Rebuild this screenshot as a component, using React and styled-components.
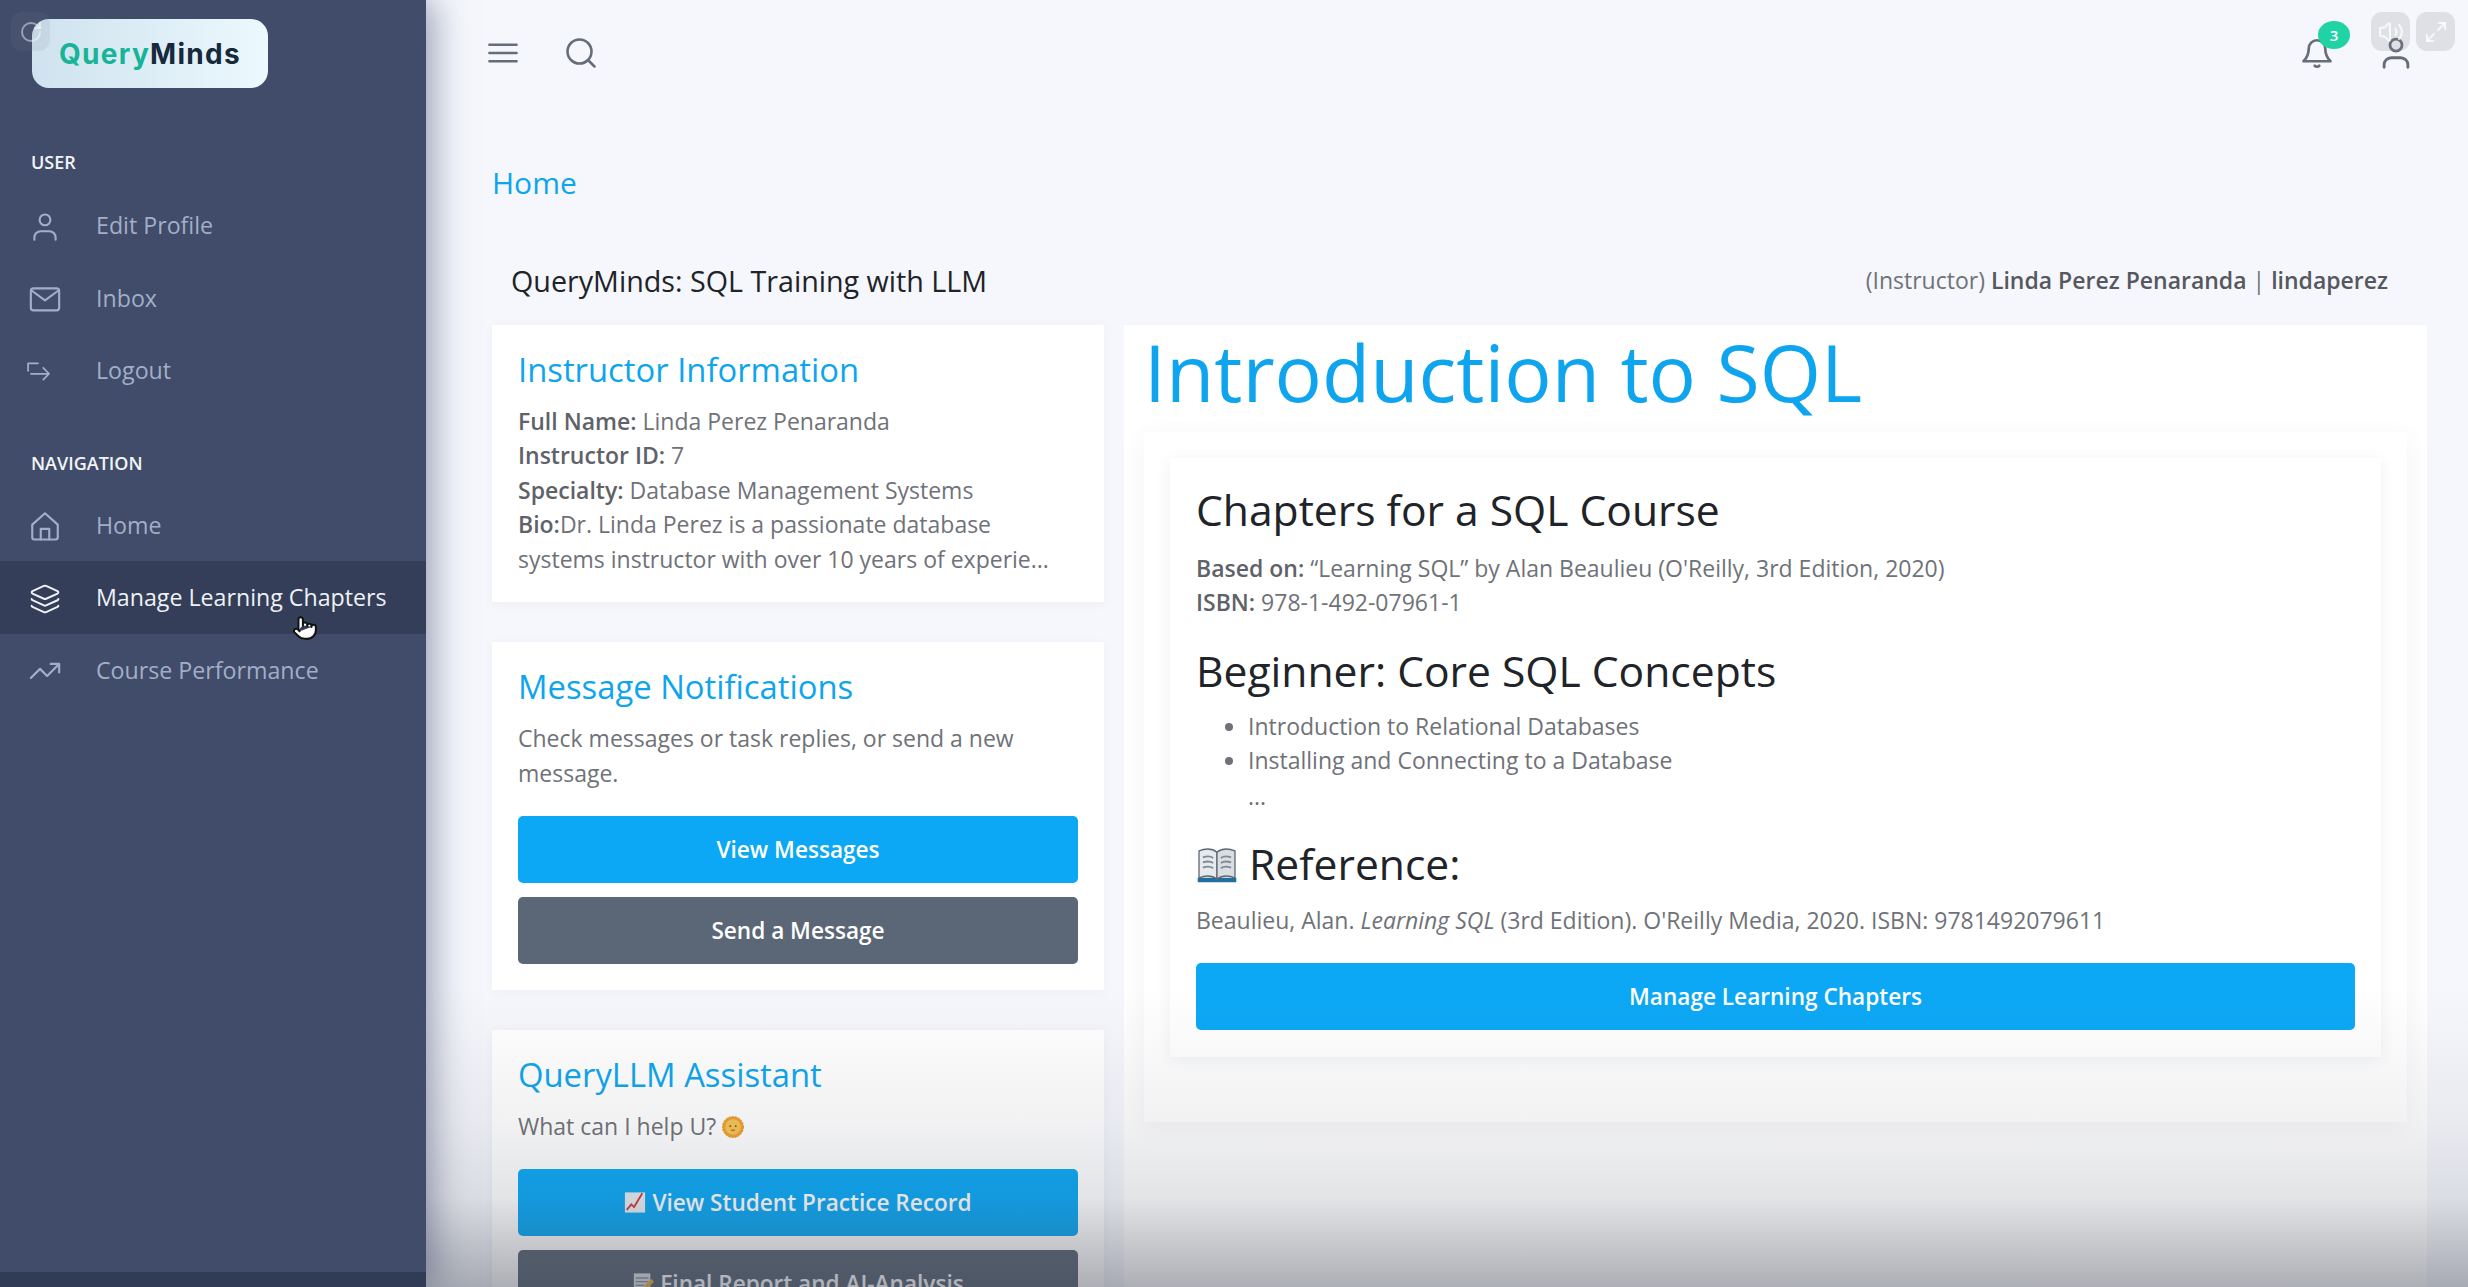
import React from 'react'
import styled, { createGlobalStyle } from 'styled-components'
import { Layers, TrendingUp, Search, Maximize2, Volume2, RotateCw, Pointer } from 'lucide-react'

const GlobalStyle = createGlobalStyle`
  html, body { margin: 0; padding: 0; background: #f5f7fc; }
  body { font-family: 'Open Sans', 'Noto Sans', sans-serif; overflow: hidden; }
  * { box-sizing: border-box; }
`

function Line({ size = 34, width = 1.5, children }) {
  return (
    <svg width={size} height={size} viewBox="0 0 24 24" fill="none" stroke="currentColor" strokeWidth={width} strokeLinecap="round" strokeLinejoin="round">
      {children}
    </svg>
  )
}

const UserIcon = props => (
  <Line {...props}>
    <circle cx="12" cy="7" r="3.8" />
    <path d="M4.5 21v-1.5a4.5 4.5 0 0 1 4.5-4.5h6a4.5 4.5 0 0 1 4.5 4.5V21" />
  </Line>
)
const MailIcon = props => (
  <Line {...props}>
    <rect x="2" y="4.5" width="20" height="15.500" rx="1.8" />
    <path d="M2.5 6l9.5 7 9.5-7" />
  </Line>
)
const LogoutIcon = props => (
  <Line {...props}>
    <path d="M12 4.500H3.500v6.500" />
    <path d="M6 13.500h15M16.500 8.500l5 5-5 5" />
  </Line>
)
const HomeIcon = props => (
  <Line {...props}>
    <path d="M3 11l9-8 9 8v9a1.500 1.500 0 0 1-1.500 1.500h-15A1.500 1.500 0 0 1 3 20z" />
    <path d="M9 21.500V14h6v7.500" />
  </Line>
)
const BellIcon = props => (
  <Line {...props}>
    <path d="M12 3.500a5.500 5.500 0 0 0-5.500 5.500c0 4-1 6-3.500 8.500h18c-2.500-2.500-3.500-4.500-3.500-8.500A5.500 5.500 0 0 0 12 3.500z" />
    <path d="M10.500 20.500c.8.900 2.200.900 3 0" />
  </Line>
)
const MenuIcon = props => (
  <Line {...props}>
    <path d="M3 6.500h18M3 12h18M3 17.500h18" />
  </Line>
)

const SunEmoji = () => (
  <EmojiSvg viewBox="0 0 24 24" width="22" height="22">
    <circle cx="12" cy="12" r="11.500" fill="#f0a02c" strokeDasharray="2 1.500" stroke="#e08d18" />
    <circle cx="12" cy="12" r="8.500" fill="#f6c255" />
    <circle cx="9" cy="11" r="1" fill="#7a4a10" />
    <circle cx="15" cy="11" r="1" fill="#7a4a10" />
    <path d="M10 15.500h4" stroke="#7a4a10" strokeWidth="1" />
  </EmojiSvg>
)
const ChartEmoji = () => (
  <EmojiSvg viewBox="0 0 24 24" width="22" height="23">
    <rect x="1" y="1" width="22" height="22" fill="#e9edf2" />
    <path d="M3 20l5-6 3 3 9-15" fill="none" stroke="#d23a3a" strokeWidth="2" />
  </EmojiSvg>
)
const MemoEmoji = () => (
  <EmojiSvg viewBox="0 0 24 24" width="22" height="23">
    <rect x="2" y="1" width="18" height="22" fill="#dfe3e8" />
    <path d="M4 6h14M4 10h14M4 14h9" stroke="#8c96a3" strokeWidth="1.500" />
    <path d="M9 22l2-5L21 7l3 3-10 10z" fill="#f2b53a" />
  </EmojiSvg>
)
const BookEmoji = () => (
  <EmojiSvg viewBox="0 0 32 28" width="42" height="36">
    <path d="M1 24h30v3.500H1z" fill="#1f6f9f" />
    <path d="M2 3c5-2 10-2 14 1v21c-4-3-9-3-14-1z" fill="#e6eaee" stroke="#5d6771" strokeWidth="1" />
    <path d="M30 3c-5-2-10-2-14 1v21c4-3 9-3 14-1z" fill="#d9dee3" stroke="#5d6771" strokeWidth="1" />
    <path d="M5 8c3-1 6-1 8 .5M5 12c3-1 6-1 8 .5M5 16c3-1 6-1 8 .5M27 8c-3-1-6-1-8 .5M27 12c-3-1-6-1-8 .5M27 16c-3-1-6-1-8 .5" stroke="#7f8993" strokeWidth="1.400" fill="none" />
  </EmojiSvg>
)

export default function App() {
  return (
    <Shell>
      <GlobalStyle />
      <Sidebar>
        <Logo><span>Query</span><b>Minds</b></Logo>
        <SectionLabel>USER</SectionLabel>
        <NavItem><NavIcon><UserIcon /></NavIcon>Edit Profile</NavItem>
        <NavItem><NavIcon><MailIcon /></NavIcon>Inbox</NavItem>
        <NavItem><NavIcon $shift={-7}><LogoutIcon size={28} /></NavIcon>Logout</NavItem>
        <SectionLabel $second>NAVIGATION</SectionLabel>
        <NavItem><NavIcon><HomeIcon /></NavIcon>Home</NavItem>
        <NavItem $active>
          <NavIcon><Layers size={32} strokeWidth={1.500} /></NavIcon>
          Manage Learning Chapters
          <HandCursor><Pointer size={26} fill="#fff" color="#111" strokeWidth={1.800} /></HandCursor>
        </NavItem>
        <NavItem><NavIcon><TrendingUp size={36} strokeWidth={1.500} /></NavIcon>Course Performance</NavItem>
      </Sidebar>

      <Main>
        <TopBar>
          <ToolGroup>
            <ToolIcon><MenuIcon size={36} width={1.800} /></ToolIcon>
            <ToolIcon><Search size={36} strokeWidth={1.700} /></ToolIcon>
          </ToolGroup>
          <ToolGroup>
            <ToolIcon>
              <BellIcon size={36} width={1.800} />
              <Badge>3</Badge>
            </ToolIcon>
            <ToolIcon><UserIcon size={38} width={1.800} /></ToolIcon>
          </ToolGroup>
        </TopBar>

        <Breadcrumb>Home</Breadcrumb>

        <TitleRow>
          <CourseTitle>QueryMinds: SQL Training with LLM</CourseTitle>
          <Who>(Instructor) <strong>Linda Perez Penaranda</strong> | <strong>lindaperez</strong></Who>
        </TitleRow>

        <Columns>
          <LeftColumn>
            <Card>
              <CardTitle>Instructor Information</CardTitle>
              <Text>
                <strong>Full Name:</strong> Linda Perez Penaranda<br />
                <strong>Instructor ID:</strong> 7<br />
                <strong>Specialty:</strong> Database Management Systems<br />
                <strong>Bio:</strong>Dr. Linda Perez is a passionate database systems instructor with over 10 years of experie...
              </Text>
            </Card>
            <Card>
              <CardTitle>Message Notifications</CardTitle>
              <Text>Check messages or task replies, or send a new message.</Text>
              <ButtonStack>
                <ActionButton>View Messages</ActionButton>
                <ActionButton $secondary>Send a Message</ActionButton>
              </ButtonStack>
            </Card>
            <Card>
              <CardTitle>QueryLLM Assistant</CardTitle>
              <Text>What can I help U? <SunEmoji /></Text>
              <ButtonStack>
                <ActionButton><ChartEmoji /> View Student Practice Record</ActionButton>
                <ActionButton $secondary><MemoEmoji /> Final Report and AI-Analysis</ActionButton>
              </ButtonStack>
            </Card>
          </LeftColumn>

          <ChapterPanel>
            <BigTitle>Introduction to SQL</BigTitle>
            <OuterCard>
              <InnerCard>
                <SectionTitle>Chapters for a SQL Course</SectionTitle>
                <Text>
                  <strong>Based on:</strong> “Learning SQL” by Alan Beaulieu (O'Reilly, 3rd Edition, 2020)<br />
                  <strong>ISBN:</strong> 978-1-492-07961-1
                </Text>
                <SectionTitle $gap={20} $after={9}>Beginner: Core SQL Concepts</SectionTitle>
                <Bullets>
                  <li>Introduction to Relational Databases</li>
                  <li>Installing and Connecting to a Database</li>
                  <Ellipsis>...</Ellipsis>
                </Bullets>
                <SectionTitle $gap={19} $after={10}><BookEmoji /> Reference:</SectionTitle>
                <Text>Beaulieu, Alan. <em>Learning SQL</em> (3rd Edition). O'Reilly Media, 2020. ISBN: 9781492079611</Text>
                <WideButton>Manage Learning Chapters</WideButton>
              </InnerCard>
            </OuterCard>
          </ChapterPanel>
        </Columns>

        <BottomFade />
      </Main>

      <PlayerButton $left={11} $faint><RotateCw size={24} /></PlayerButton>
      <PlayerButton $left={2371}><Volume2 size={26} /></PlayerButton>
      <PlayerButton $left={2416}><Maximize2 size={24} /></PlayerButton>
    </Shell>
  )
}

const Shell = styled.div`
  position: relative;
  display: flex;
  width: 2468px;
  height: 1287px;
  overflow: hidden;
  background: #f5f7fc;
  color: #6b6f76;
`

const Sidebar = styled.aside`
  position: relative;
  z-index: 2;
  flex: 0 0 426px;
  padding-top: 19px;
  background: #404c69;
  border-bottom: 15px solid #313b55;
  box-shadow: 6px 0 34px rgba(50, 60, 100, 0.5);
`

const Logo = styled.div`
  display: flex;
  align-items: center;
  justify-content: center;
  width: 236px;
  height: 69px;
  margin-left: 32px;
  border-radius: 17px;
  background: linear-gradient(90deg, #cfe2ee, #ecf9fe);
  font-family: 'Inter', sans-serif;
  font-size: 28px;
  font-weight: 700;
  letter-spacing: 1.300px;

  span { color: #18b497; }
  b { color: #17293c; font-weight: 700; }
`

const SectionLabel = styled.div`
  height: 24px;
  margin: ${p => (p.$second ? '44px' : '62px')} 0 ${p => (p.$second ? '14px' : '15px')} 31px;
  color: #f2f4f8;
  font-size: 18px;
  font-weight: 600;
  line-height: 24px;
`

const NavItem = styled.div`
  position: relative;
  display: flex;
  align-items: center;
  height: 72.500px;
  padding-left: 96px;
  background: ${p => (p.$active ? '#343e58' : 'transparent')};
  color: ${p => (p.$active ? '#eef1f6' : '#a3aec8')};
  font-size: 23.200px;
`

const NavIcon = styled.span`
  position: absolute;
  left: ${p => 28 + (p.$shift || 0)}px;
  display: flex;
  justify-content: center;
  width: 34px;
  padding-top: 3px;
`

const HandCursor = styled.span`
  position: absolute;
  left: 292px;
  top: 54px;
  display: flex;
`

const Main = styled.main`
  position: relative;
  flex: 1;
  min-width: 0;
  padding: 0 41px 0 66px;
`

const TopBar = styled.header`
  display: flex;
  align-items: center;
  justify-content: space-between;
  height: 106px;
  margin: 0 12px 0 -7px;
`

const ToolGroup = styled.div`
  display: flex;
  align-items: center;
  gap: 42px;
`

const ToolIcon = styled.span`
  position: relative;
  display: flex;
  color: #666c78;
`

const Badge = styled.span`
  position: absolute;
  top: -14px;
  left: 19px;
  display: flex;
  align-items: center;
  justify-content: center;
  width: 32px;
  height: 28px;
  border-radius: 50%;
  background: #1fd3a5;
  color: #fff;
  font-size: 15px;
  font-weight: 600;
`

const Breadcrumb = styled.div`
  height: 44px;
  margin-top: 55px;
  color: #0ea5ee;
  font-size: 30px;
  line-height: 44px;
`

const TitleRow = styled.div`
  display: flex;
  align-items: center;
  justify-content: space-between;
  height: 44px;
  padding: 0 39px 0 19px;
  margin-top: 53px;
`

const CourseTitle = styled.div`
  color: #202328;
  font-size: 28.700px;
`

const Who = styled.div`
  color: #6f7278;
  font-size: 23px;

  strong { font-weight: 600; color: #55585e; }
`

const Columns = styled.div`
  display: grid;
  grid-template-columns: 612px 1303px;
  gap: 20px;
  margin-top: 23px;
`

const LeftColumn = styled.div`
  display: flex;
  flex-direction: column;
  gap: 40px;
`

const Card = styled.section`
  padding: 22px 26px 26px;
  background: #fff;
  box-shadow: 0 2px 10px rgba(90, 100, 140, 0.05);
`

const CardTitle = styled.h3`
  margin: 0 0 10.500px;
  color: #0ea5ee;
  font-size: 32.800px;
  font-weight: 400;
  line-height: 46px;
`

const Text = styled.p`
  margin: 0;
  color: #6f7278;
  font-size: 23px;
  line-height: 34.600px;

  strong { font-weight: 600; color: #5f6268; }
`

const ButtonStack = styled.div`
  display: flex;
  flex-direction: column;
  gap: 14px;
  margin-top: 26px;
`

const ActionButton = styled.div`
  display: flex;
  align-items: center;
  justify-content: center;
  gap: 6px;
  height: 67px;
  border-radius: 5px;
  background: ${p => (p.$secondary ? '#5b6776' : '#0ca8f5')};
  color: #fff;
  font-size: 22.600px;
  font-weight: 600;
`

const WideButton = styled(ActionButton)`
  margin-top: 26px;
`

const EmojiSvg = styled.svg`
  display: inline-block;
  vertical-align: -3px;
  flex-shrink: 0;
`

const ChapterPanel = styled.section`
  height: 1000px;
  padding: 0 20px;
  background: #fff;
`

const BigTitle = styled.h1`
  margin: 0;
  height: 107px;
  color: #0ea5ee;
  font-size: 78.800px;
  font-weight: 400;
  line-height: 93px;
`

const OuterCard = styled.div`
  height: 690px;
  padding: 26px;
  background: #fff;
  box-shadow: 0 6px 22px rgba(80, 90, 130, 0.07);
`

const InnerCard = styled.div`
  height: 599px;
  padding: 20.500px 26px;
  background: #fff;
  box-shadow: 0 3px 14px rgba(80, 90, 130, 0.09);
`

const SectionTitle = styled.h2`
  margin: ${p => p.$gap || 0}px 0 ${p => p.$after || 12}px;
  color: #202328;
  font-size: 42.600px;
  font-weight: 400;
  line-height: 60px;
`

const Bullets = styled.ul`
  margin: 0;
  padding-left: 52px;
  color: #6f7278;
  font-size: 23px;
  line-height: 34.600px;
`

const Ellipsis = styled.div`
  line-height: 36px;
`

const BottomFade = styled.div`
  position: absolute;
  left: 0;
  right: 0;
  bottom: 0;
  height: 300px;
  pointer-events: none;
  background: linear-gradient(180deg, rgba(60, 65, 80, 0) 0%, rgba(60, 65, 80, 0.07) 45%, rgba(60, 65, 80, 0.14) 70%, rgba(60, 65, 80, 0.42) 100%);
`

const PlayerButton = styled.div`
  position: absolute;
  z-index: 3;
  top: 12px;
  left: ${p => p.$left}px;
  display: flex;
  align-items: center;
  justify-content: center;
  width: 39px;
  height: 39px;
  border-radius: 11px;
  background: rgba(130, 135, 145, ${p => (p.$faint ? 0.12 : 0.2)});
  color: rgba(255, 255, 255, ${p => (p.$faint ? 0.45 : 0.75)});
`
